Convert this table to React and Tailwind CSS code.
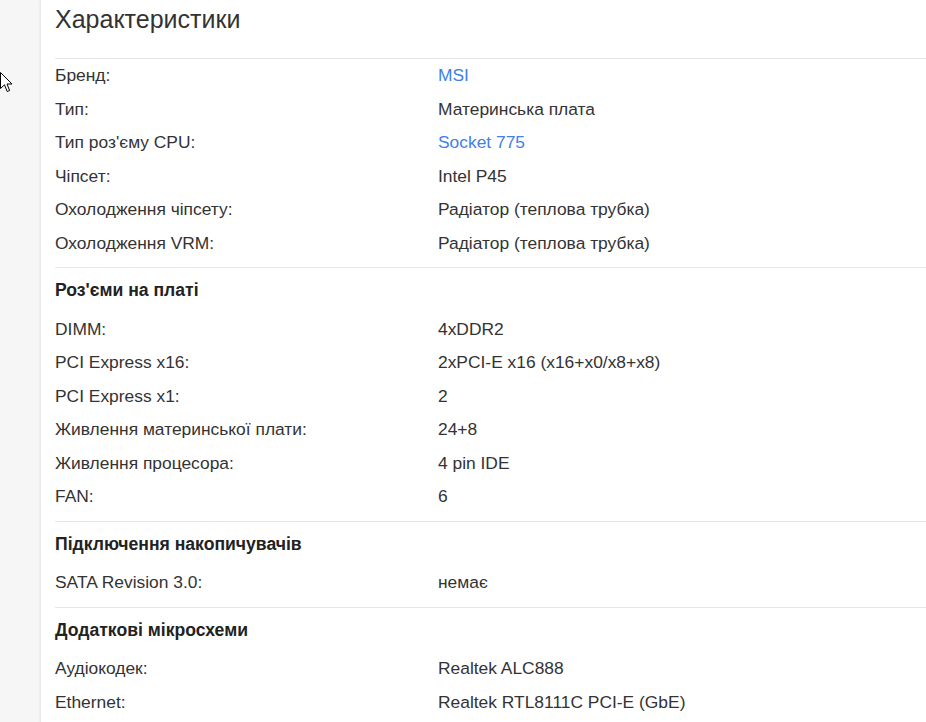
import React from "react";

const sections = [
  {
    title: null,
    rows: [
      ["Бренд:", "MSI", true],
      ["Тип:", "Материнська плата"],
      ["Тип роз'єму CPU:", "Socket 775", true],
      ["Чіпсет:", "Intel P45"],
      ["Охолодження чіпсету:", "Радіатор (теплова трубка)"],
      ["Охолодження VRM:", "Радіатор (теплова трубка)"],
    ],
  },
  {
    title: "Роз'єми на платі",
    rows: [
      ["DIMM:", "4xDDR2"],
      ["PCI Express x16:", "2xPCI-E x16 (x16+x0/x8+x8)"],
      ["PCI Express x1:", "2"],
      ["Живлення материнської плати:", "24+8"],
      ["Живлення процесора:", "4 pin IDE"],
      ["FAN:", "6"],
    ],
  },
  {
    title: "Підключення накопичувачів",
    rows: [["SATA Revision 3.0:", "немає"]],
  },
  {
    title: "Додаткові мікросхеми",
    rows: [
      ["Аудіокодек:", "Realtek ALC888"],
      ["Ethernet:", "Realtek RTL8111C PCI-E (GbE)"],
    ],
  },
];

export default function App() {
  return (
    <div
      className="relative flex h-[722px] w-[926px] overflow-hidden bg-white text-[#333]"
      style={{ fontFamily: '"Liberation Sans", Arial, sans-serif' }}
    >
      <div className="w-[41px] shrink-0 bg-[#f6f6f6] shadow-[inset_-3px_0_3px_-2px_rgba(0,0,0,0.08)]" />
      <div className="absolute left-0 top-[72px]">
        <svg width="13" height="21" viewBox="0 0 13 21">
          <path
            d="M0.5 0.5 L0.5 16.5 L4.5 12.8 L7.2 19.5 L9.6 18.5 L7 12 L12 12 Z"
            fill="white"
            stroke="black"
            strokeWidth="1"
            strokeLinejoin="miter"
          />
        </svg>
      </div>
      <div className="flex-1 pl-[14px]">
        <div className="h-[58px] pt-[2px] text-[25px] leading-[34px] text-[#333]">
          Характеристики
        </div>
        {sections.map((s, i) => (
          <div key={i} className="border-t border-[#e6e6e6] pb-[7px]">
            {s.title && (
              <div className="pt-[6px] pb-[5px] text-[17.6px] font-bold leading-[33.5px] text-[#222]">
                {s.title}
              </div>
            )}
            {s.rows.map(([l, v, link], j) => (
              <div key={j} className="flex h-[33.5px] items-center pb-[1px] text-[17.4px]">
                <div className="w-[383px] shrink-0">{l}</div>
                <div className={link ? "text-[#3f80ea]" : ""}>{v}</div>
              </div>
            ))}
          </div>
        ))}
      </div>
    </div>
  );
}
